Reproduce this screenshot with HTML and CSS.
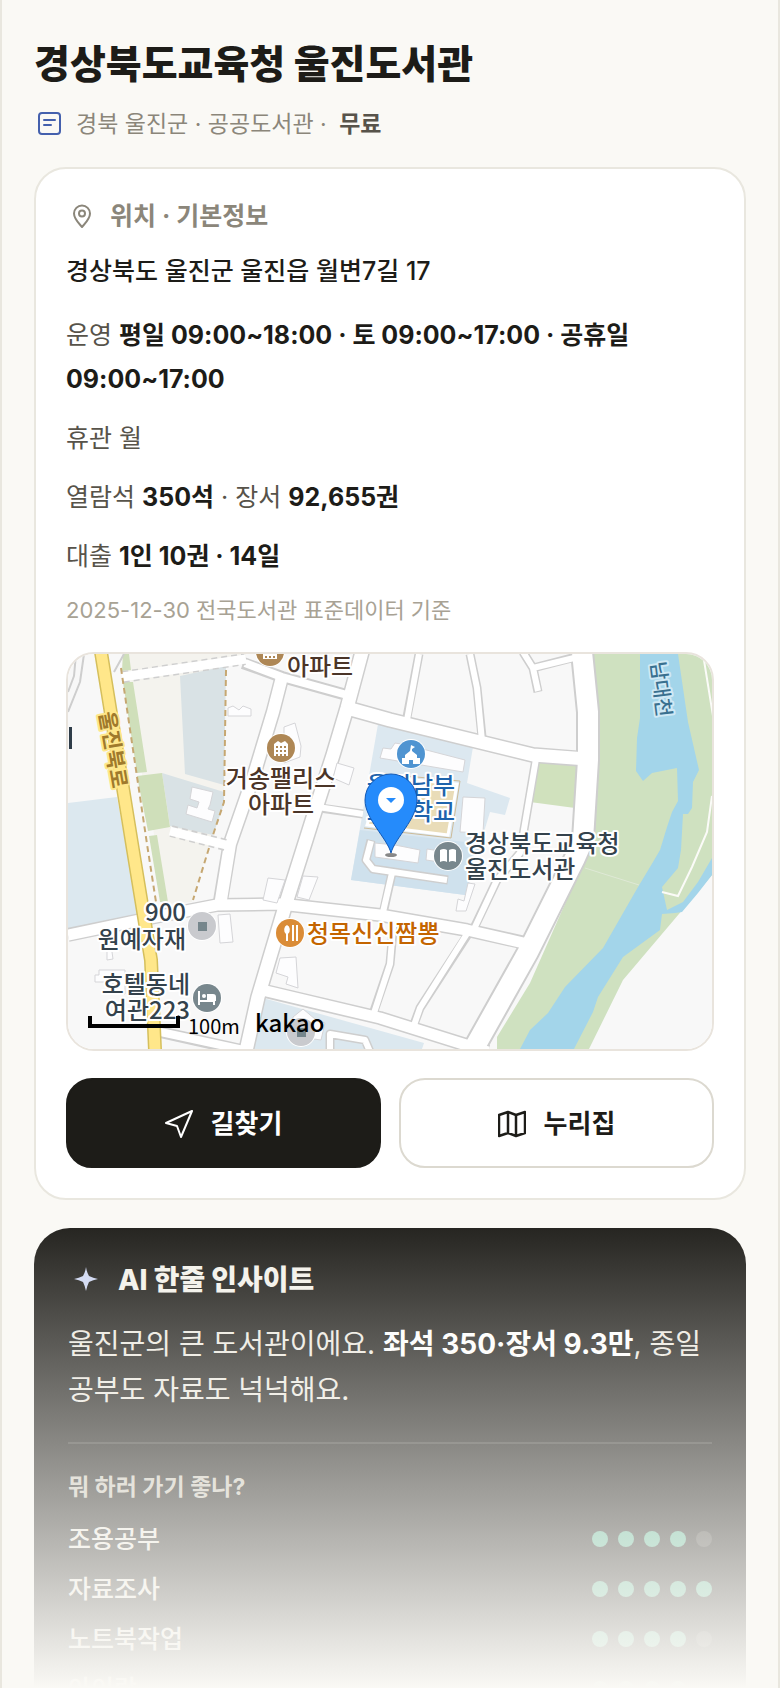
FILE: index.html
```
<!DOCTYPE html>
<html lang="ko">
<head>
    <meta charset="UTF-8">
    <meta name="viewport" content="width=device-width, initial-scale=1.0">
    <title>경상북도교육청 울진도서관</title>
    <link rel="stylesheet" href="styles.css">
</head>

<body>
<div class="page">
    <header class="head">
        <h1>경상북도교육청 울진도서관</h1>
        <p class="sub">
            <span class="icon">
                <svg width="24" height="24" viewBox="0 0 24 24" fill="none" stroke="#4460ad" stroke-width="2" stroke-linecap="round">
                    <rect x="1" y="1" width="21" height="21" rx="3"/>
                    <path d="M6 8h11M6 13h7"/>
                </svg>
            </span>
            <span>경북 울진군 · 공공도서관 · <b>무료</b></span>
        </p>
    </header>

    <main>
        <section class="card">
            <h2 class="card-title">
                <span class="icon">
                    <svg width="26" height="26" viewBox="0 0 26 26" fill="none" stroke="#8b867a" stroke-width="2" stroke-linejoin="round">
                        <path d="M13 24c-3-3.500-8-8-8-13.500a8 8 0 0 1 16 0c0 5.500-5 10-8 13.500z"/>
                        <circle cx="13" cy="10.500" r="3"/>
                    </svg>
                </span>
                위치 · 기본정보
            </h2>
            <p class="address">경상북도 울진군 울진읍 월변7길 17</p>
            <div class="info">
                <p>운영 <b>평일 09:00~18:00 · 토 09:00~17:00 · 공휴일 09:00~17:00</b></p>
                <p>휴관 월</p>
                <p>열람석 <b>350석</b> · 장서 <b>92,655권</b></p>
                <p>대출 <b>1인 10권 · 14일</b></p>
            </div>
            <p class="source">2025-12-30 전국도서관 표준데이터 기준</p>

            <div class="map">
                <svg viewBox="0 0 644 395" preserveAspectRatio="xMidYMid slice" role="img" aria-label="울진도서관 주변 지도">
                    <rect width="644" height="395" fill="#f8f8f8"/>

                    <!-- land -->
                    <path fill="#f4f3ee" d="M54 0H178V8L158 12 156 140 124 248 100 250 54 20z"/>
                    <path fill="#d9e2e5" d="M112 22L158 12 156 131 117 120zM94 119L156 138V150L145 181 102 172z"/>
                    <path fill="#cfdfba" d="M55 0h6l2 16-9 1zM55 28h10l14 90-10 1zM69 122l25-3 8 54-22 4zM81 182l8-1 11 67h-8z"/>
                    <path fill="#dce8ef" d="M0 149L49 143 71 262 0 276zM195 344L356 389 354 395H186z"/>
                    <path fill="#dce8f0" d="M310 70L405 93 399 129 442 144 437 161 422 158 397 241 283 226z"/>
                    <path fill="#cfe1ed" d="M292 176L415 190 397 241 283 226z"/>
                    <path fill="#cfe1c0" d="M525 0L531 58V106L526 178 519 200 462 329 429 383V395H521L555 326 644 221V0z"/>
                    <path fill="#d0e1bd" d="M469 108l40 2-2 44-45-6z"/>
                    <path fill="#a3d5ea" d="M572 0H610L620 68 631 116 625 128 624 154 620 160H615L613 196 610 214 594 233 599 256 615 248 630 228 644 204V221L630 239 614 258 607 259 594 260 592 276 555 303 530 343 525 358 506 395H452L462 376 480 359 497 333 535 294 570 233 585 208 592 196 599 173 604 158 610 147 609 114 584 119 575 127 568 117 569 84 572 64z"/>
                    <path fill="none" stroke="#fbfbf8" stroke-width="2" d="M635 0l10 62M644 142l-5 36-15 35-14 29-16-4"/>
                    <path fill="none" stroke="#dfe9d6" d="M517 214l54 17"/>

                    <!-- road edges -->
                    <g fill="none" stroke="#cecece" stroke-linejoin="round">
                        <path stroke-width="9" d="M351 0L339 63M402 0L409 34 414 83M455 -2L465 14 504 4M465 14L470 38M469 99L452 199 429 226 407 272M402 277L352 354 345 373M326 266L322 310 305 360M252 154L295 160M324 219L316 255M262 400L262 380 297 386 303 400M303 186L298 206 305 215 380 226"/>
                        <path stroke-width="12" d="M175 9L214 23 275 40M92 378L178 397"/>
                        <path stroke-width="14" d="M0 281L72 266 149 251 212 250 312 261 399 276 462 290M193 336L312 364 395 390 420 398"/>
                        <path stroke-width="15" d="M214 23L205 58 185 124 162 190 152 250"/>
                        <path stroke-width="16" d="M294 -2L279 54 265 101 249 151 219 246 190 343 178 397M279 54L322 66 465 101 515 105"/>
                        <path stroke-width="24" d="M514 -2L520 58V106L515 186 507 204 460 298 400 405"/>
                        <path stroke-width="2" d="M8 0L6 22 0 38M16 0L12 28 0 58M56 0L46 18"/>
                    </g>
                    <!-- road surface -->
                    <g fill="none" stroke="#fff" stroke-linejoin="round">
                        <path stroke-width="6" d="M351 0L339 66M402 0L409 34 414 87M455 -2L465 14 506 4M465 14L470 37M469 99L452 199 429 226 406 275M402 275L352 354 344 377M326 262L322 310 304 365M250 153L295 160M324 219L315 258M262 400L262 380 297 386 303 400M303 187L298 206 305 215 379 226"/>
                        <path stroke-width="8" d="M177 9L214 23 279 41M88 377L180 397"/>
                        <path stroke-width="11" d="M0 281L72 266 149 251 212 250 312 261 399 276 464 291M190 335L312 364 395 390 420 398"/>
                        <path stroke-width="12" d="M214 23L205 58 185 124 162 190 152 252"/>
                        <path stroke-width="13" d="M294 -2L279 54 265 101 249 151 219 246 190 343 178 397M279 54L322 66 465 101 519 105"/>
                        <path stroke-width="20" d="M514 -2L520 58V106L515 186 507 204 460 298 400 405"/>
                    </g>
                    <g fill="none">
                        <path stroke="#cfcfcf" stroke-width="12" stroke-dasharray="6 4" d="M55 23L177 5M103 177L158 191"/>
                        <path stroke="#fff" stroke-width="9" d="M54 23L178 5M102 177L162 192"/>
                        <path stroke="#c6a771" stroke-width="2" stroke-dasharray="6 4" d="M53 14L60 62 79 190 88 248M158 16L156 148 145 181M141 194L125 246"/>
                        <path stroke="#d5bf5c" stroke-width="14" d="M33 -2L65 196 83 306 87 396"/>
                        <path stroke="#ffe78a" stroke-width="11" d="M33 -2L65 196 83 306 87 396"/>
                    </g>

                    <!-- buildings -->
                    <g fill="#fdfdfe" stroke="#d5d5d8">
                        <path d="M315 94l8 1 4-6 12 2 58 15-2 12-83-14zM395 143l22 1-2 35-23-1zM307 189l20 2 25 5-2 13-43-6zM359 195l13 2v11l-14-2zM400 229l7 1-9 27H388l2-12 6 2z"/>
                        <path d="M200 224l17 2-8 23-14-3zM235 222l15 1-9 23-12-3zM150 261l12-1 3 28-13 1zM212 304l16-1 2 31-12-4 2-7-12-4zM269 109l17 5-5 17-16-7z"/>
                        <path d="M124 133l21 5-3 13-2 4 7 2-3 11-26-8 2-9 9 3 2-6-9-3zM216 73l11-4 6 23-1 11-16 6zM160 62v-8l5-2 6 4 4-4 8 3v7zM31 316h26v24l-12-2v-10H27v-7h4zM39 298v8l6-1-1-7"/>
                        <path d="M225 363l10-8 12 10 10 4-4 17-28-4z"/>
                    </g>
                    <path fill="#e9dcb8" stroke="#fff" stroke-width="3" d="M314 123L389 130 380 181 299 171z"/>
                    <path fill="none" stroke="#cdbb98" d="M316 120L392 127 383 184 296 174"/>

                    <!-- road and river names -->
                    <text class="road-name" text-anchor="middle" transform="translate(38 97) rotate(80)">울진북로</text>
                    <text class="river-name" text-anchor="middle" transform="translate(586 36) rotate(83)">남대천</text>
                    <path fill="#2f3d49" d="M1 73h3v22H1z"/>

                    <!-- places -->
                    <g class="pin-ring">
                        <circle cx="202" cy="-2" r="14" fill="#ae8755"/>
                        <circle cx="213" cy="94" r="14" fill="#ae8755"/>
                        <circle cx="134" cy="272" r="14" fill="#c9cace"/>
                        <circle cx="233" cy="378" r="14" fill="#c9cace"/>
                        <circle cx="139" cy="344" r="14" fill="#78878d"/>
                        <circle cx="222" cy="279" r="14" fill="#da8c37"/>
                        <circle cx="343" cy="100" r="14" fill="#4f94d1"/>
                        <circle cx="380" cy="202" r="14" fill="#78878d"/>
                    </g>
                    <path fill="#76868c" d="M130 268h9v9h-9zM229 374h9v9h-9z"/>
                    <path fill="#fff" d="M206 90l4-3 3 2 4-2 3 3v12H206zM195 -6h14V5H195z"/>
                    <path fill="none" stroke="#ae8755" stroke-width="2" stroke-dasharray="2 2" d="M208 93h11M208 97h11M208 101h11M197 -1h11M197 3h11"/>
                    <path fill="#fff" d="M130 337h2v9h15v5h-2v-3h-13v3h-2zM139 340h6q3 0 3 3v4h-9z"/>
                    <circle cx="136" cy="342" r="2" fill="#fff"/>
                    <path fill="#fff" d="M219 271a4 5 0 0 1 1 9v7h-2v-7a4 5 0 0 1 1-9zM224 271h2v16h-2zM228 271h2v16h-2z"/>
                    <path fill="#fff" d="M343 91l4 2-3 2v2l5 4v3h3v6h-7v-4h-4v4h-7v-6h3v-3l5-4z"/>
                    <path fill="#fff" d="M372 196q4-2 7 0v12q-3-2-7 0zM381 196q4-2 7 0v12q-4-2-7 0z"/>

                    <g class="place">
                        <g fill="#4b3528" text-anchor="middle">
                            <text x="252" y="21">아파트</text>
                            <text x="213" y="133">거송팰리스</text>
                            <text x="213" y="159">아파트</text>
                        </g>
                        <g fill="#1e63ac" text-anchor="middle">
                            <text x="343" y="140">울진남부</text>
                            <text x="343" y="166">초등학교</text>
                        </g>
                        <g fill="#34424c">
                            <text x="397" y="198">경상북도교육청</text>
                            <text x="397" y="224">울진도서관</text>
                        </g>
                        <text x="239" y="288" fill="#c46500">청목신신짬뽕</text>
                        <g fill="#34424c" text-anchor="end">
                            <text x="118" y="267">900</text>
                            <text x="118" y="294">원예자재</text>
                            <text x="122" y="339">호텔동네</text>
                            <text x="122" y="365">여관223</text>
                        </g>
                    </g>

                    <!-- marker -->
                    <ellipse cx="323" cy="201" rx="6" ry="2" fill="#555" opacity=".7"/>
                    <path fill="#258bfb" stroke="#1259b5" d="M323 199C319 184 297 165 297 146a26 26 0 0 1 52 0C349 165 327 184 323 199z"/>
                    <circle cx="323" cy="146" r="13" fill="#fff"/>
                    <path fill="#258bfb" d="M318 144h10l-5 5z"/>

                    <!-- scale -->
                    <path fill="none" stroke="#000" stroke-width="4" d="M22 362v10h88v-10"/>
                    <text class="scale" x="120" y="380">100m</text>
                    <text class="brand" x="187" y="378">kakao</text>
                </svg>
            </div>

            <div class="actions">
                <a class="btn btn-dark" href="#route">
                    <svg width="28" height="28" viewBox="0 0 28 28" fill="none" stroke="currentColor" stroke-width="2" stroke-linejoin="round">
                        <path d="M27 1L1 13l11 3 4 11z"/>
                    </svg>
                    길찾기
                </a>
                <a class="btn" href="#site">
                    <svg width="28" height="28" viewBox="0 0 28 28" fill="none" stroke="currentColor" stroke-width="2.500" stroke-linejoin="round">
                        <path d="M1 5l9-3 8 3 9-3v21l-9 3-8-3-9 3zM10 2v21M18 5v21"/>
                    </svg>
                    누리집
                </a>
            </div>
        </section>

        <section class="insight">
            <h2>
                <svg width="36" height="36" viewBox="0 0 36 36" fill="#cdd6f2">
                    <path d="M18 5q1 6 3 9 4 2 9 3-5 1-9 3-2 4-3 9-1-5-3-9-4-2-9-3 5-1 9-3 2-3 3-9z"/>
                </svg>
                AI 한줄 인사이트
            </h2>
            <p class="summary">울진군의 큰 도서관이에요. <b>좌석 350·장서 9.3만</b>, 종일 공부도 자료도 넉넉해요.</p>
            <h3>뭐 하러 가기 좋나?</h3>
            <ul>
                <li>조용공부 <span class="dots"><i></i><i></i><i></i><i></i><i class="off"></i></span></li>
                <li>자료조사 <span class="dots"><i></i><i></i><i></i><i></i><i></i></span></li>
                <li>노트북작업 <span class="dots"><i></i><i></i><i></i><i></i><i class="off"></i></span></li>
                <li>아이랑 <span class="dots"><i></i><i></i><i></i><i></i><i class="off"></i></span></li>
            </ul>
        </section>
    </main>
    <div class="fade"></div>
</div>
</body>
</html>
```
FILE: styles.css
```
*{
    box-sizing: border-box;
    margin: 0;
    padding: 0;
}
body{
    background: #faf9f5;
    color: #1d1c18;
    font-family: Inter, "Noto Sans CJK KR", sans-serif;
    font-size: 25px;
    line-height: 44px;
    word-break: keep-all;
}
.page{
    position: relative;
    height: 100vh;
    overflow: hidden;
    padding: 40px 32px 0;
    border-left: 2px solid #e9e7df;
    border-right: 2px solid #e9e7df;
}
h1{
    font-size: 39px;
    line-height: 48px;
    font-weight: 800;
}
.sub{
    display: flex;
    align-items: center;
    gap: 10px;
    margin: 18px 0 25px;
    font-size: 23px;
    line-height: 36px;
    color: #8b867a;
}
.sub b{
    margin-left: 6px;
    color: #57534a;
}
.icon{
    display: flex;
    justify-content: center;
    width: 32px;
}

.card{
    padding: 30px;
    background: #fff;
    border: 2px solid #e9e7df;
    border-radius: 32px;
}
.card-title{
    display: flex;
    align-items: center;
    gap: 12px;
    margin-bottom: 16px;
    font-size: 25px;
    line-height: 34px;
    color: #8b867a;
}
.address{
    margin-bottom: 20px;
    font-weight: 500;
}
.info{
    display: flex;
    flex-direction: column;
    gap: 15px;
    color: #57534a;
}
.info b{
    font-weight: 700;
    color: #1d1c18;
}
.source{
    margin: 15px 0 25px;
    font-size: 22px;
    line-height: 34px;
    color: #a8a294;
}

.map{
    overflow: hidden;
    border: 2px solid #e9e4dd;
    border-radius: 28px;
}
.map svg{
    display: block;
    width: 100%;
}
.pin-ring{
    stroke: #fff;
    stroke-width: 2px;
    paint-order: stroke;
}
.place, .road-name, .river-name{
    font-family: "Noto Sans CJK KR", sans-serif;
    font-size: 24px;
    font-weight: 500;
    stroke: #fff;
    stroke-width: 4px;
    stroke-linejoin: round;
    paint-order: stroke;
}
.road-name{
    font-size: 21px;
    font-weight: 700;
    fill: #a07a2c;
    stroke: #ffe78a;
}
.river-name{
    font-size: 20px;
    fill: #39708f;
    stroke: #cfe9f5;
}
.scale{
    font-family: "Noto Sans CJK KR", sans-serif;
    font-size: 20px;
}
.brand{
    font-family: "Noto Sans CJK KR", sans-serif;
    font-size: 24px;
    font-weight: 500;
}

.actions{
    display: flex;
    gap: 18px;
    margin-top: 27px;
}
.btn{
    display: flex;
    flex: 1;
    align-items: center;
    justify-content: center;
    gap: 18px;
    height: 90px;
    padding-top: 2px;
    border: 2px solid #dcd9d0;
    border-radius: 26px;
    font-size: 26px;
    font-weight: 700;
    color: #1d1c18;
    text-decoration: none;
}
.btn-dark{
    background: #1d1c18;
    border-color: #1d1c18;
    color: #fff;
}

.insight{
    margin-top: 28px;
    padding: 30px 34px;
    background: #1d1c18;
    border-radius: 36px;
    color: #ece9e0;
}
.insight h2{
    display: flex;
    align-items: center;
    gap: 14px;
    font-size: 28px;
    font-weight: 800;
    color: #f3f1ea;
}
.summary{
    margin: 19px 0 29px;
    font-size: 28px;
    line-height: 46px;
}
.summary b{
    color: #fff;
}
.insight h3{
    padding: 26px 0 10px;
    border-top: 2px solid #3a3934;
    font-size: 23px;
    line-height: 34px;
    color: #c9c5b9;
}
.insight li{
    display: flex;
    align-items: center;
    justify-content: space-between;
    height: 50px;
    font-weight: 500;
}
.dots{
    display: flex;
    gap: 10px;
}
.dots i{
    width: 16px;
    height: 16px;
    border-radius: 50%;
    background: #59b492;
}
.dots .off{
    background: #42413c;
}
.fade{
    position: absolute;
    left: 0;
    right: 0;
    bottom: 0;
    height: 480px;
    background: linear-gradient(rgba(250, 249, 245, 0), #faf9f5);
}
```
